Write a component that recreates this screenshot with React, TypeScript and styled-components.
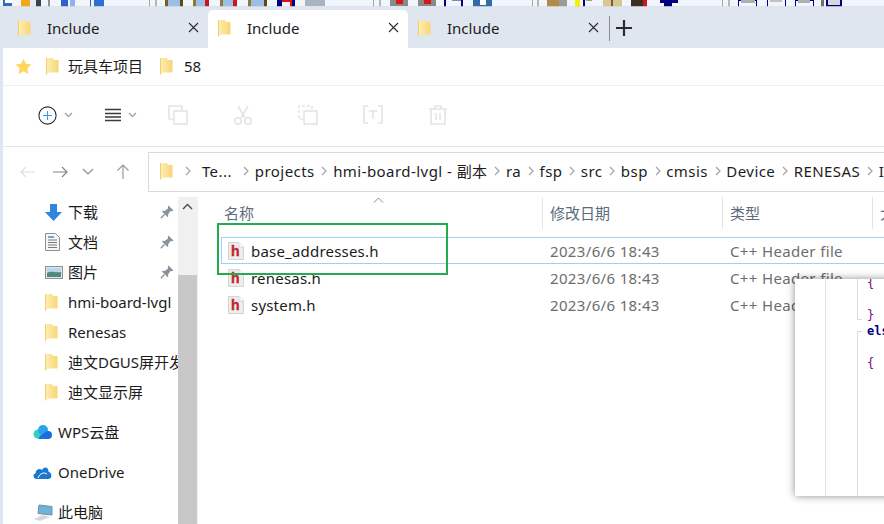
import React from 'react'
import styled, { createGlobalStyle } from 'styled-components'

const GlobalStyle = createGlobalStyle`
  html, body {
    margin: 0;
    padding: 0;
    background: #fff;
  }
  * {
    box-sizing: border-box;
  }
`

const Window = styled.div`
  position: relative;
  width: 884px;
  height: 524px;
  overflow: hidden;
  display: flex;
  flex-direction: column;
  background: #fff;
  color: #111;
  font-family: 'Noto Sans', 'Noto Sans CJK SC', sans-serif;
  font-size: 15px;
`

const BackStrip = styled.svg`
  display: block;
  flex: none;
`

const TabBar = styled.div`
  flex: none;
  height: 41px;
  padding: 3px 0 0 8px;
  display: flex;
  align-items: stretch;
  background: #dfe6f0;
`

const Tab = styled.div<{ $active?: boolean }>`
  width: 200px;
  height: 38px;
  padding: 0 9px 3px 10px;
  display: flex;
  align-items: center;
  background: ${(p) => (p.$active ? '#fff' : 'transparent')};
  border-radius: 5px 5px 0 0;
`

const TabTitle = styled.span`
  flex: 1;
  margin-left: 16px;
  line-height: 20px;
  color: #1c1c1c;
`

const TabDivider = styled.div`
  width: 1px;
  height: 25px;
  margin: 6px 6px 0 1px;
  background: #8e8e8e;
`

const NewTab = styled.div`
  margin-top: 10px;
  height: 17px;
`

const Body = styled.div`
  flex: 1;
  min-height: 0;
  display: flex;
  flex-direction: column;
  border-left: 3px solid #dfe6f0;
`

const Favorites = styled.div`
  flex: none;
  height: 38px;
  padding: 0 0 1px 12px;
  display: flex;
  align-items: center;
  border-bottom: 1px solid #eeeeee;
`

const FavLink = styled.div<{ $first?: boolean }>`
  margin-left: ${(p) => (p.$first ? '14px' : '17px')};
  display: flex;
  align-items: center;
  gap: ${(p) => (p.$first ? '9px' : '11px')};
  line-height: 20px;
  color: #1c1c1c;
`

const Toolbar = styled.div`
  flex: none;
  height: 61px;
  padding: 0 0 2px 35px;
  display: flex;
  align-items: center;
  border-bottom: 1px solid #dfe5ec;
`

const ToolMenu = styled.div<{ $width: number }>`
  width: ${(p) => p.$width}px;
  display: flex;
  align-items: center;
  gap: 7px;
`

const ToolIcons = styled.div`
  display: flex;
  align-items: center;
  gap: 45px;
`

const NavRow = styled.div`
  flex: none;
  height: 45px;
  padding: 5px 0 0 17px;
  display: flex;
  align-items: flex-start;
`

const NavButtons = styled.div`
  width: 128px;
  height: 39px;
  display: flex;
  align-items: center;
  gap: 16px;
`

const NavChevron = styled.span`
  display: flex;
  margin: 0 6px 0 -2px;
`

const AddressBox = styled.div`
  flex: 1;
  min-width: 0;
  height: 40px;
  margin-right: -20px;
  padding: 0 0 2px 11px;
  display: flex;
  align-items: center;
  gap: 4.7px;
  border: 1px solid #d9d9d9;
  overflow: hidden;
  white-space: nowrap;
  color: #1c1c1c;

  & > * {
    flex: none;
  }
`

const Crumb = styled.span<{ $shortened?: boolean }>`
  margin: ${(p) => (p.$shortened ? '0 4.5px 0 5px' : '0')};
  line-height: 20px;
  letter-spacing: 0.45px;
`

const CrumbFolder = styled.span`
  display: flex;
  margin-right: 5.5px;
`

const Main = styled.div`
  flex: 1;
  min-height: 0;
  display: flex;
`

const Sidebar = styled.div`
  width: 175px;
  flex: none;
  padding-top: 5px;
  overflow: hidden;
`

const SideRow = styled.div<{ $top?: boolean }>`
  height: 30px;
  margin-top: ${(p) => (p.$top ? '10px' : '0')};
  padding-left: ${(p) => (p.$top ? '30px' : '42px')};
  display: flex;
  align-items: center;
  white-space: nowrap;
  color: #1c1c1c;
`

const SideIcon = styled.span<{ $width: number }>`
  width: ${(p) => p.$width}px;
  flex: none;
  display: flex;
  align-items: center;
`

const SideLabel = styled.span`
  flex: 1;
  min-width: 0;
  overflow: hidden;
  line-height: 20px;
`

const Pin = styled.span`
  width: 18px;
  flex: none;
  display: flex;
`

const ScrollBar = styled.div`
  width: 20px;
  flex: none;
  margin-top: 5px;
  padding-right: 1px;
  display: flex;
  flex-direction: column;
  background: #f0f0f0;
`

const ScrollButton = styled.div`
  height: 78px;
  padding-top: 6px;
  display: flex;
  justify-content: center;
  align-items: flex-start;
`

const ScrollThumb = styled.div`
  flex: 1;
  background: #c8c8c8;
`

const FileList = styled.div`
  flex: 1;
  min-width: 0;
  position: relative;
`

const HeaderRow = styled.div`
  height: 45px;
  padding-top: 5px;
  display: grid;
  grid-template-columns: 344px 180px 150px 1fr;
  align-items: start;
  color: #5c6b80;
`

const HeaderCell = styled.div<{ $first?: boolean }>`
  height: 32px;
  padding-left: ${(p) => (p.$first ? '26px' : '7px')};
  border-left: ${(p) => (p.$first ? 'none' : '1px solid #e5e5e5')};
  line-height: 32px;
  white-space: nowrap;
  overflow: hidden;
`

const SortCaret = styled.svg`
  position: absolute;
  top: 5px;
  left: 175px;
`

const FileRow = styled.div<{ $focused?: boolean }>`
  height: 27px;
  margin-left: 23px;
  display: grid;
  grid-template-columns: 320px 180px 1fr;
  align-items: center;
  border: 1px solid ${(p) => (p.$focused ? '#99d1ff' : 'transparent')};
  border-right: none;
`

const FileName = styled.div`
  padding-left: 6px;
  display: flex;
  align-items: center;
  gap: 7px;
  line-height: 20px;
  letter-spacing: 0.2px;
  color: #1c1c1c;
`

const FileMeta = styled.div`
  padding-left: 8px;
  line-height: 20px;
  letter-spacing: 0.35px;
  white-space: nowrap;
  color: #6d6d6d;
`

const Highlight = styled.div`
  position: absolute;
  left: 217px;
  top: 223px;
  width: 231px;
  height: 52px;
  border: 2px solid #22ac4f;
`

const CodeWindow = styled.div`
  position: absolute;
  left: 795px;
  top: 279px;
  width: 110px;
  height: 217px;
  display: flex;
  background: #fff;
  box-shadow: 0 0 8px rgba(0, 0, 0, 0.45);
  overflow: hidden;
`

const Gutter = styled.div<{ $width: number; $divider?: boolean }>`
  width: ${(p) => p.$width}px;
  flex: none;
  border-right: ${(p) => (p.$divider ? '1px solid #e2e2e2' : 'none')};
`

const CodeArea = styled.div`
  position: relative;
  flex: 1;
  margin-top: -4px;
  padding-left: 10px;
  font-family: 'DejaVu Sans Mono', monospace;
  font-size: 12px;
  line-height: 16px;
`

const FoldLine = styled.div<{ $top: number; $height: number; $end: 'top' | 'bottom' }>`
  position: absolute;
  left: 0;
  top: ${(p) => p.$top}px;
  width: 5px;
  height: ${(p) => p.$height}px;
  border-left: 1px solid #dcdcdc;
  border-${(p) => p.$end}: 1px solid #dcdcdc;
`

const CodeLine = styled.div<{ $keyword?: boolean }>`
  height: 16px;
  color: ${(p) => (p.$keyword ? '#000080' : '#800080')};
  font-weight: ${(p) => (p.$keyword ? 700 : 400)};
`

const stripParts: [number, number, number, string][] = [
  [3, 9, 6, '#2f6fc0'], [5, 7, 3, '#fff'], [21, 12, 7, '#f0a818'], [30, 8, 7, '#e4e8f0'], [36, 5, 7, '#3a4252'],
  [48, 2, 7, '#8f8f8f'], [61, 7, 7, '#2a62c8'], [70, 5, 7, '#8fb4ea'], [90, 1, 7, '#2a62c8'], [94, 10, 7, '#2f6fd0'],
  [149, 1, 7, '#a8a8a8'], [155, 2, 7, '#b8b8b8'],
  [165, 3, 7, '#7a6020'], [168, 12, 7, '#9cc0e4'], [180, 3, 7, '#5a4818'],
  [193, 3, 7, '#907838'], [196, 9, 7, '#9cc0e4'], [205, 4, 7, '#c81818'],
  [220, 3, 7, '#907838'], [223, 10, 7, '#9cc0e4'], [233, 4, 7, '#c81818'],
  [248, 3, 7, '#907838'], [251, 13, 7, '#9cc0e4'], [264, 3, 7, '#5a4818'],
  [277, 5, 7, '#000080'], [282, 8, 2, '#e01010'], [290, 2, 7, '#e01010'], [292, 3, 7, '#000080'],
  [305, 20, 6, '#a8b4c4'],
  [373, 1, 7, '#a8a8a8'], [379, 2, 7, '#b8b8b8'],
  [390, 18, 6, '#8a8a8a'], [396, 7, 4, '#d81818'], [418, 18, 6, '#8a8a8a'], [424, 7, 4, '#d81818'],
  [444, 2, 7, '#000080'], [452, 9, 1, '#8a8a8a'], [461, 2, 7, '#000080'],
  [473, 19, 7, '#2f6ca8'], [480, 6, 5, '#fff'],
  [532, 1, 7, '#a8a8a8'], [537, 2, 7, '#b8b8b8'],
  [547, 12, 7, '#b08a48'], [559, 8, 7, '#9a9a9a'],
  [575, 5, 7, '#f8f000'], [583, 2, 7, '#000080'], [586, 6, 1, '#9a9a9a'],
  [603, 19, 7, '#d8c890'], [611, 2, 7, '#706040'],
  [631, 12, 7, '#3a3020'], [643, 4, 7, '#c81818'],
  [660, 18, 3, '#000080'], [664, 8, 7, '#000080'],
  [722, 1, 7, '#a8a8a8'], [728, 2, 7, '#b8b8b8'],
  [738, 19, 1, '#000080'], [738, 1, 7, '#000080'], [756, 1, 7, '#000080'], [741, 14, 3, '#b0b0b0'],
  [767, 1, 7, '#000080'], [785, 1, 7, '#000080'], [770, 12, 2, '#c0c0c0'],
  [795, 19, 1, '#000080'], [795, 1, 7, '#000080'], [813, 1, 7, '#000080'], [798, 12, 3, '#b0b0b0'],
  [821, 3, 7, '#707070'], [826, 16, 7, '#000080'], [828, 12, 5, '#d8d8d8'],
]

const TopStrip = () => (
  <BackStrip width={884} height={7} viewBox="0 0 884 7">
    <rect width={884} height={7} fill="#f1f5fd" />
    {stripParts.map(([x, w, h, c], i) => (
      <rect key={i} x={x} y={0} width={w} height={h} fill={c} />
    ))}
    <rect y={6} width={884} height={1} fill="#d9dde5" opacity={0.8} />
  </BackStrip>
)

const Folder = () => (
  <svg width={13} height={18} viewBox="0 0 13 18">
    <defs>
      <linearGradient id="folderFill" x1="0" x2="1" y1="0" y2="0">
        <stop offset="0" stopColor="#fdeeb4" />
        <stop offset="1" stopColor="#f8d673" />
      </linearGradient>
    </defs>
    <path d="M0.5 1H7L8 3H12.5V15.5H3L0.5 17.5Z" fill="url(#folderFill)" />
    <path d="M0.5 1V17.5" stroke="#f2cf70" strokeWidth={1} />
  </svg>
)

const Close = () => (
  <svg width={11} height={11} viewBox="0 0 11 11">
    <path d="M1 1L10 10M10 1L1 10" stroke="#2b2b2b" strokeWidth={1.1} />
  </svg>
)

const Chevron = ({ color = '#9c9c9c' }: { color?: string }) => (
  <svg width={9} height={6} viewBox="0 0 9 6">
    <path d="M1 1L4.5 4.5L8 1" fill="none" stroke={color} strokeWidth={1.2} />
  </svg>
)

const CrumbSep = () => (
  <svg width={9} height={10} viewBox="0 0 9 10">
    <path d="M3 1L7 5L3 9" fill="none" stroke="#a6a6a6" strokeWidth={1.3} />
  </svg>
)

const IconGhost = ({ children }: { children: React.ReactNode }) => (
  <svg width={20} height={20} viewBox="0 0 20 20" fill="none" stroke="#e4e4e4" strokeWidth={1.6}>
    {children}
  </svg>
)

const ArrowIcon = ({ d, color, width = 16 }: { d: string; color: string; width?: number }) => (
  <svg width={width} height={16} viewBox={`0 0 ${width} 16`}>
    <path d={d} fill="none" stroke={color} strokeWidth={1.2} />
  </svg>
)

const PinIcon = () => (
  <svg width={14} height={14} viewBox="0 0 14 14">
    <path d="M8.5 0.5L13.5 5.5L12 6.2L10.5 6L8 9.5L8.3 11.5L7.5 12L2 6.5L2.6 5.7L4.6 6L8 3.5L7.8 2Z" fill="#8a929c" />
    <path d="M4.5 9.5L0.8 13.2" stroke="#8a929c" strokeWidth={1.4} />
  </svg>
)

const HeaderFile = () => (
  <svg width={16} height={18} viewBox="0 0 16 18">
    <path d="M0.5 0.5H11L15.5 5V17.5H0.5Z" fill="#efecec" stroke="#d4d4d4" />
    <path d="M11 0.5V5H15.5" fill="#fff" stroke="#d4d4d4" />
    <text x={3} y={13.6} fontFamily="'Liberation Sans', sans-serif" fontSize={14} fontWeight={700} fill="#c0272d" stroke="#c0272d" strokeWidth={0.4}>
      h
    </text>
  </svg>
)

const sideFolders = ['hmi-board-lvgl', 'Renesas', '迪文DGUS屏开发板', '迪文显示屏']

const crumbs = ['Te...', 'projects', 'hmi-board-lvgl - 副本', 'ra', 'fsp', 'src', 'bsp', 'cmsis', 'Device', 'RENESAS', 'Include']

const files = ['base_addresses.h', 'renesas.h', 'system.h']

const App = () => (
  <Window>
    <GlobalStyle />
    <TopStrip />
    <TabBar>
      <Tab>
        <Folder />
        <TabTitle>Include</TabTitle>
        <Close />
      </Tab>
      <Tab $active>
        <Folder />
        <TabTitle>Include</TabTitle>
        <Close />
      </Tab>
      <Tab>
        <Folder />
        <TabTitle>Include</TabTitle>
        <Close />
      </Tab>
      <TabDivider />
      <NewTab>
        <svg width={16} height={16} viewBox="0 0 16 16">
          <path d="M0 8H16M8 0V16" stroke="#2b2b2b" strokeWidth={2.2} />
        </svg>
      </NewTab>
    </TabBar>
    <Body>
      <Favorites>
        <svg width={17} height={17} viewBox="0 0 24 24">
          <path d="M12 1L15.4 8.2L23.2 9.2L17.5 14.6L19 22.5L12 18.6L5 22.5L6.5 14.6L0.8 9.2L8.6 8.2Z" fill="#ffd75e" />
        </svg>
        <FavLink $first>
          <Folder />
          <span>玩具车项目</span>
        </FavLink>
        <FavLink>
          <Folder />
          <span>58</span>
        </FavLink>
      </Favorites>
      <Toolbar>
        <ToolMenu $width={67}>
          <svg width={19} height={19} viewBox="0 0 19 19">
            <circle cx={9.5} cy={9.5} r={8.6} fill="none" stroke="#2b2b2b" strokeWidth={1.1} />
            <path d="M9.5 5V14M5 9.5H14" stroke="#3d9bf0" strokeWidth={1.1} />
          </svg>
          <Chevron />
        </ToolMenu>
        <ToolMenu $width={63}>
          <svg width={16} height={14} viewBox="0 0 16 14">
            <path d="M0 1.5H16M0 5.5H16M0 9H16M0 12.5H16" stroke="#3a3a3a" strokeWidth={1.3} />
          </svg>
          <Chevron />
        </ToolMenu>
        <ToolIcons>
          <IconGhost>
            <path d="M5 14H1V1H14V5" />
            <rect x={6} y={6} width={13} height={13} />
          </IconGhost>
          <IconGhost>
            <path d="M5 1L12 13M15 1L8 13" />
            <circle cx={5} cy={16} r={3.2} />
            <circle cx={15} cy={16} r={3.2} />
          </IconGhost>
          <IconGhost>
            <path d="M5 14H1V1H14V5" strokeDasharray="3 2" />
            <rect x={6} y={6} width={13} height={13} />
          </IconGhost>
          <IconGhost>
            <path d="M5 1H1V18H5M15 1H19V18H15M6 6H14M10 6V14" />
          </IconGhost>
          <IconGhost>
            <path d="M1 4H19M7 4V1H13V4M3 4V19H17V4M8 8V15M12 8V15" />
          </IconGhost>
        </ToolIcons>
      </Toolbar>
      <NavRow>
        <NavButtons>
          <ArrowIcon d="M15 8H1M6 3L1 8L6 13" color="#dedede" />
          <ArrowIcon d="M1 8H15M10 3L15 8L10 13" color="#858585" />
          <NavChevron>
            <svg width={12} height={7} viewBox="0 0 12 7">
              <path d="M1 1L6 6L11 1" fill="none" stroke="#8f8f8f" strokeWidth={1.2} />
            </svg>
          </NavChevron>
          <ArrowIcon d="M7 15V1M1.5 6.5L7 1L12.5 6.5" color="#9a9a9a" width={14} />
        </NavButtons>
        <AddressBox>
          <CrumbFolder>
            <Folder />
          </CrumbFolder>
          {crumbs.map((c) => (
            <React.Fragment key={c}>
              <CrumbSep />
              <Crumb $shortened={c === 'Te...'}>{c}</Crumb>
            </React.Fragment>
          ))}
        </AddressBox>
      </NavRow>
      <Main>
        <Sidebar>
          <SideRow>
            <SideIcon $width={23}>
              <svg width={17} height={17} viewBox="0 0 17 17">
                <path d="M5 0H12V8H17L8.5 17L0 8H5Z" fill="#2f86e0" />
              </svg>
            </SideIcon>
            <SideLabel>下载</SideLabel>
            <Pin>
              <PinIcon />
            </Pin>
          </SideRow>
          <SideRow>
            <SideIcon $width={23}>
              <svg width={15} height={18} viewBox="0 0 15 18">
                <path d="M0.5 0.5H10.5L14.5 4.5V17.5H0.5Z" fill="#f6f6f6" stroke="#8f8f8f" />
                <path d="M3 4H9" stroke="#3a82d8" strokeWidth={1.4} />
                <path d="M3 7H12M3 9.5H12M3 12H12M3 14.5H12" stroke="#7a7a7a" />
              </svg>
            </SideIcon>
            <SideLabel>文档</SideLabel>
            <Pin>
              <PinIcon />
            </Pin>
          </SideRow>
          <SideRow>
            <SideIcon $width={23}>
              <svg width={18} height={13} viewBox="0 0 18 13">
                <rect x={0.5} y={0.5} width={17} height={12} fill="#dfe8ee" stroke="#8f8f8f" />
                <rect x={2} y={2} width={14} height={5} fill="#b8d6ec" />
                <path d="M2 7C6 4 10 7 16 6V11H2Z" fill="#4f8a7c" />
              </svg>
            </SideIcon>
            <SideLabel>图片</SideLabel>
            <Pin>
              <PinIcon />
            </Pin>
          </SideRow>
          {sideFolders.map((f) => (
            <SideRow key={f}>
              <SideIcon $width={23}>
                <Folder />
              </SideIcon>
              <SideLabel>{f}</SideLabel>
            </SideRow>
          ))}
          <SideRow $top>
            <SideIcon $width={25}>
              <svg width={19} height={14} viewBox="0 0 19 14">
                <circle cx={5} cy={9} r={4.5} fill="#35d0c0" />
                <circle cx={10} cy={5} r={5} fill="#2aa4e8" />
                <path d="M5 14H15A4 4 0 0 0 15 6C12 6 11 9 8 10Z" fill="#1a6fe0" />
              </svg>
            </SideIcon>
            <SideLabel>WPS云盘</SideLabel>
          </SideRow>
          <SideRow $top>
            <SideIcon $width={25}>
              <svg width={19} height={13} viewBox="0 0 19 13">
                <path d="M3 13A3 3 0 0 1 2.5 7.2C3 3 7 2 9 4C11 0 16 1 15.5 6C19 6 20 13 15 13Z" fill="#1a78d0" />
                <path d="M5 12C7 7 11 6 14 8" fill="none" stroke="#fff" strokeWidth={1} />
              </svg>
            </SideIcon>
            <SideLabel>OneDrive</SideLabel>
          </SideRow>
          <SideRow $top>
            <SideIcon $width={25}>
              <svg width={20} height={17} viewBox="0 0 20 17">
                <path d="M6 1L19 2.5V11L5 9.5Z" fill="#6fb2de" stroke="#7c8c98" />
                <path d="M1 15L10 11L17 13L7 17Z" fill="#d4d8dc" />
              </svg>
            </SideIcon>
            <SideLabel>此电脑</SideLabel>
          </SideRow>
        </Sidebar>
        <ScrollBar>
          <ScrollButton>
            <svg width={11} height={7} viewBox="0 0 11 7">
              <path d="M1 6L5.5 1.5L10 6" fill="none" stroke="#4a4a4a" strokeWidth={1.4} />
            </svg>
          </ScrollButton>
          <ScrollThumb />
        </ScrollBar>
        <FileList>
          <SortCaret width={11} height={6} viewBox="0 0 11 6">
            <path d="M1 5.5L5.5 1L10 5.5" fill="none" stroke="#8a8a8a" />
          </SortCaret>
          <HeaderRow>
            <HeaderCell $first>名称</HeaderCell>
            <HeaderCell>修改日期</HeaderCell>
            <HeaderCell>类型</HeaderCell>
            <HeaderCell>大小</HeaderCell>
          </HeaderRow>
          {files.map((f, i) => (
            <FileRow key={f} $focused={i === 0}>
              <FileName>
                <HeaderFile />
                <span>{f}</span>
              </FileName>
              <FileMeta>2023/6/6 18:43</FileMeta>
              <FileMeta>C++ Header file</FileMeta>
            </FileRow>
          ))}
        </FileList>
      </Main>
    </Body>
    <Highlight />
    <CodeWindow>
      <Gutter $width={31} $divider />
      <Gutter $width={31} />
      <CodeArea>
        <FoldLine $top={0} $height={45} $end="bottom" />
        <FoldLine $top={56} $height={170} $end="top" />
        <CodeLine>{'{'}</CodeLine>
        <CodeLine />
        <CodeLine>{'}'}</CodeLine>
        <CodeLine $keyword>else</CodeLine>
        <CodeLine />
        <CodeLine>{'{'}</CodeLine>
      </CodeArea>
    </CodeWindow>
  </Window>
)

export default App
